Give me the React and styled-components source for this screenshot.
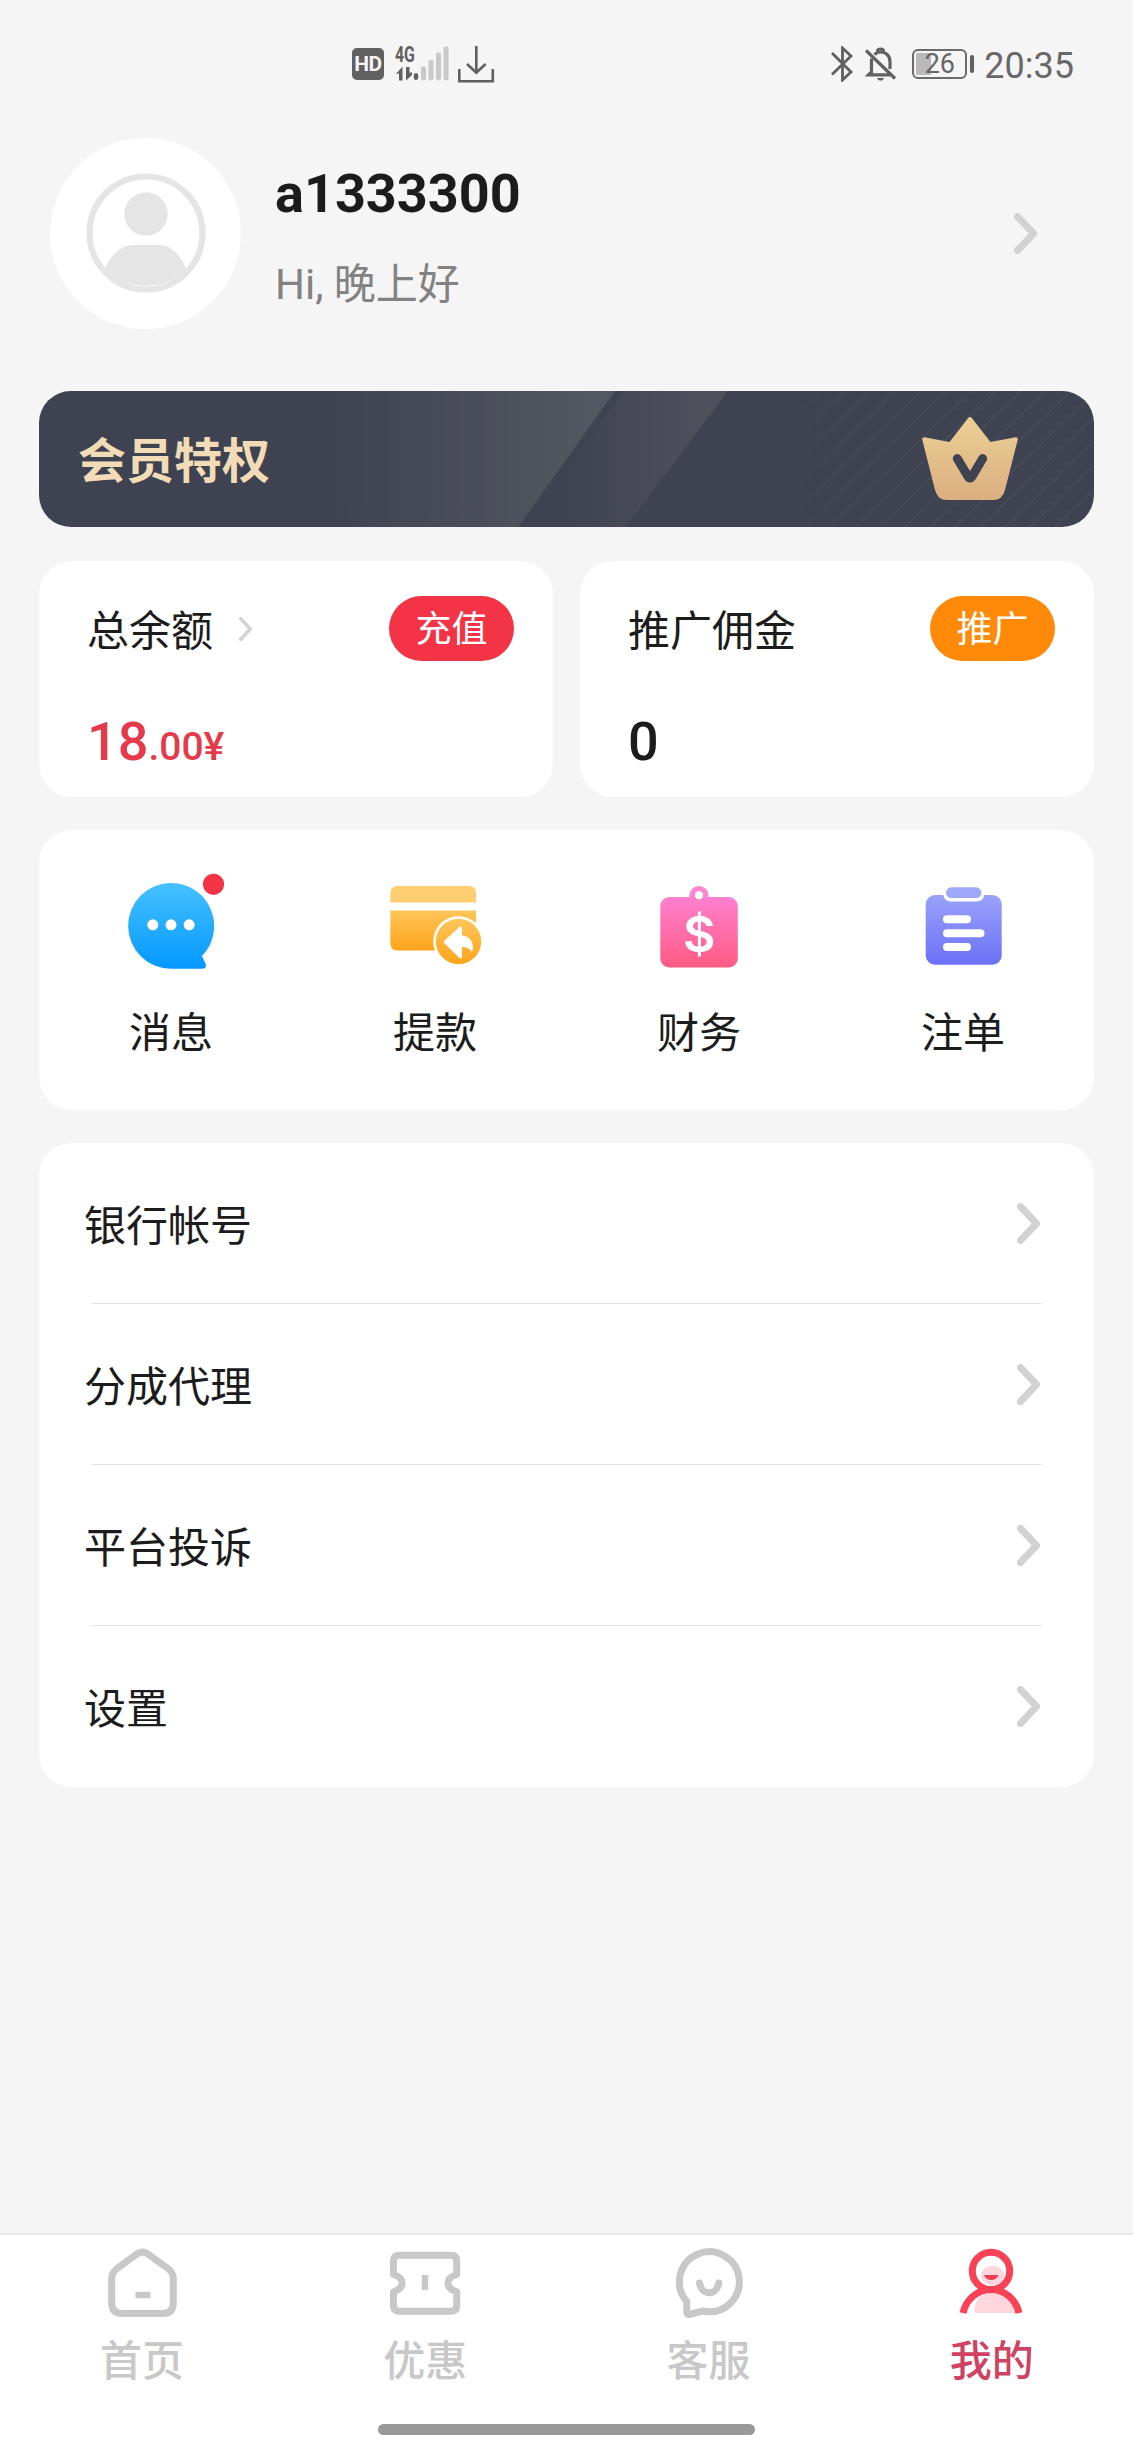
import React from "react";
import styled, { createGlobalStyle } from "styled-components";

const GlobalStyle = createGlobalStyle`
    *{
        box-sizing:border-box;
    }
    body{
        margin:0;
        background-color:#f5f5f5;
        font-family: Roboto, "Noto Sans CJK SC", sans-serif;
        color:#1c1c1c;
    }
    svg{
        display:block;
        flex:none;
    }
`

const Page = styled.div`
    width:1133px;
    height:2453px;
    display:flex;
    flex-direction:column;
    background-color:#f5f5f5;
    overflow:hidden;
`

const StatusBar = styled.div`
    height:128px;
    flex:none;
    display:flex;
    justify-content:space-between;
    align-items:center;
    padding:0 59px 0 352px;
`

const StatusGroup = styled.div`
    display:flex;
    align-items:center;
`

const HdBadge = styled.span`
    width:32px;
    height:32px;
    margin-right:11px;
    border-radius:5px;
    background-color:#606060;
    color:#f4f4f4;
    font-size:21px;
    font-weight:700;
    line-height:33px;
    text-align:center;
    letter-spacing:-0.5px;
`

const Network = styled.div`
    width:54px;
    height:36px;
    margin-right:8px;
    position:relative;
`

const NetworkLabel = styled.span`
    position:absolute;
    left:0;
    top:0;
    font-size:22px;
    font-weight:700;
    line-height:18px;
    color:#606060;
    transform:scaleX(0.72);
    transform-origin:left;
`

const Battery = styled.div`
    width:55px;
    height:30px;
    margin-left:15px;
    border:2px solid #6b6b6b;
    border-radius:6px;
    font-size:27px;
    line-height:26px;
    font-weight:400;
    color:#666;
    background:linear-gradient(#b9b9b9, #b9b9b9) 2px 2px / 15px 22px no-repeat;
    display:flex;
    align-items:center;
    justify-content:center;
`

const BatteryCap = styled.i`
    width:4px;
    height:18px;
    margin-left:3px;
    border-radius:2px;
    background-color:#606060;
`

const Clock = styled.span`
    margin-left:10px;
    padding-top:3px;
    font-size:36px;
    line-height:40px;
    color:#686868;
`

const Profile = styled.header`
    height:192px;
    margin-top:9px;
    padding:0 96px 0 50px;
    display:flex;
    align-items:center;
    flex:none;
`

const Avatar = styled.div`
    width:191px;
    height:191px;
    border-radius:50%;
    background-color:#fff;
    display:flex;
    align-items:center;
    justify-content:center;
`

const ProfileText = styled.div`
    flex:1;
    padding:6px 0 0 34px;
`

const UserName = styled.h1`
    margin:0;
    font-size:54px;
    line-height:64px;
    height:64px;
    font-weight:700;
`

const Greeting = styled.p`
    margin:34px 0 0;
    height:50px;
    font-size:42px;
    line-height:50px;
    color:#828282;
`

const Content = styled.main`
    margin-top:62px;
    padding:0 39px;
    display:flex;
    flex-direction:column;
    gap:33px;
`

const VipBanner = styled.section`
    height:136px;
    margin-bottom:1px;
    position:relative;
    border-radius:32px;
    overflow:hidden;
    background-color:#3f4250;
    display:flex;
    align-items:center;
    justify-content:space-between;
    padding:0 75px 0 39px;
`

const BannerArt = styled.svg`
    position:absolute;
    left:0;
    top:0;
`

const BannerTitle = styled.h2`
    margin:0;
    padding-top:4px;
    position:relative;
    font-size:48px;
    line-height:60px;
    height:62px;
    font-weight:700;
    color:#f1dcb7;
`

const CrownIcon = styled.svg`
    position:relative;
`

const Balances = styled.section`
    display:grid;
    grid-template-columns:514px 514px;
    gap:27px;
`

const Card = styled.div`
    background-color:#fff;
    border-radius:33px;
`

const BalanceCard = styled(Card)`
    height:236px;
    padding:35px 39px 0 48px;
`

const BalanceTop = styled.div`
    height:65px;
    display:flex;
    align-items:center;
`

const BalanceTitle = styled.span`
    height:50px;
    padding-top:3px;
    line-height:50px;
    font-size:42px;
    margin-right:26px;
`

const PillButton = styled.button`
    width:125px;
    height:65px;
    margin-left:auto;
    padding:3px 0 0;
    border:none;
    border-radius:33px;
    background-color:${props => props.color};
    color:#fff;
    font-family:inherit;
    font-size:36px;
    line-height:60px;
`

const Amount = styled.div`
    margin-top:49px;
    font-size:54px;
    line-height:64px;
    font-weight:500;
    color:${props => props.color};

    small{
        font-size:39px;
    }
`

const MenuCard = styled(Card)`
    height:280px;
    display:grid;
    grid-template-columns:repeat(4, 264px);
`

const MenuItem = styled.div`
    display:flex;
    flex-direction:column;
    align-items:center;
    padding-top:43px;
`

const MenuLabel = styled.span`
    height:50px;
    margin-top:36px;
    font-size:42px;
    line-height:50px;
`

const List = styled(Card)`
    height:644px;
`

const Row = styled.div`
    height:161px;
    padding:0 54px 0 45px;
    display:flex;
    align-items:center;
    justify-content:space-between;
    background:${props => props.$last ? "none" : "linear-gradient(#e4e4e4, #e4e4e4) 52px 160px / 951px 2px no-repeat"};
`

const RowLabel = styled.span`
    height:50px;
    padding-top:3px;
    font-size:42px;
    line-height:50px;
`

const TabBar = styled.nav`
    height:220px;
    margin-top:auto;
    flex:none;
    border-top:2px solid #e8e8e8;
    background-color:#fff;
    display:flex;
    flex-direction:column;
    align-items:center;
`

const Tabs = styled.div`
    width:100%;
    height:189px;
    display:grid;
    grid-template-columns:repeat(4, 1fr);
`

const Tab = styled.div`
    display:flex;
    flex-direction:column;
    align-items:center;
    padding-top:11px;
    color:${props => props.$active ? "#d04263" : "#c8c8c8"};
`

const TabLabel = styled.span`
    height:50px;
    margin-top:17px;
    padding-left:1px;
    font-size:42px;
    line-height:50px;
    font-weight:500;
`

const HomeIndicator = styled.div`
    width:377px;
    height:11px;
    border-radius:6px;
    background-color:#999;
`

const Chevron = ({ width = 23, height = 41, stroke = 7 }) => (
    <svg width={width} height={height} fill="none" stroke="#d2d2d2" strokeWidth={stroke} strokeLinecap="round" strokeLinejoin="round">
        <path d={`M${stroke / 2} ${stroke / 2}L${width - stroke / 2} ${height / 2}L${stroke / 2} ${height - stroke / 2}`} />
    </svg>
)

// data arrows under 4G and the four signal bars
const SignalIcon = () => (
    <svg width="54" height="36" viewBox="395 46 54 36">
        <path d="M396 74l6.500-7.500v14h-3.500v-7z M406 67h3.500v6l2.500-1v3l-6 5.500z" fill="#606060" />
        <ellipse cx="416" cy="76.500" rx="2.300" ry="3.500" fill="#606060" />
        <g fill="#c9c9c9">
            <rect x="421" y="66.500" width="5" height="14" rx="2" />
            <rect x="428.500" y="60" width="5" height="20.500" rx="2" />
            <rect x="436" y="52.500" width="5" height="28" rx="2" />
            <rect x="443.500" y="46.500" width="5" height="34" rx="2" />
        </g>
    </svg>
)

const DownloadIcon = () => (
    <svg width="38" height="38" viewBox="457 44 38 38" fill="none" stroke="#606060" strokeWidth="2.600">
        <path d="M476.300 45v27M467 63l9.300 8.700 9.300-8.700M459.300 68v12.200h33.500V68" />
    </svg>
)

const BluetoothIcon = () => (
    <svg width="22" height="36" viewBox="831 46 22 36" fill="none" stroke="#606060" strokeWidth="2.800">
        <path d="M832 53l19 19-8.500 8V48l8.500 8-19 18.500" />
    </svg>
)

const BellIcon = styled.svg`
    margin-left:12px;
`

const MutedBellIcon = () => (
    <BellIcon width="32" height="34" viewBox="865 46 32 34" fill="none" stroke="#606060" strokeWidth="3.200">
        <path d="M866 49.500l29 28" />
        <path d="M871.500 57.500V71l-3 2.800H890M874.500 53.500c2-2 4-2.500 6-2.500 5.500 0 9.500 4 9.500 9.500V68" />
        <path d="M877.500 50.500c0-2 1.500-2.500 3-2.500s3 .5 3 2.500" />
        <path d="M877 77h7c-.5 2-2 2.500-3.500 2.500S877.500 79 877 77z" fill="#606060" stroke="none" />
    </BellIcon>
)

const AvatarIcon = () => (
    <svg width="120" height="120" viewBox="0 0 120 120">
        <circle cx="60" cy="60" r="56.500" fill="none" stroke="#e5e5e5" strokeWidth="6.200" />
        <circle cx="60" cy="41" r="21.700" fill="#e5e5e5" />
        <path d="M19 96C23 84 34 72 47 72H73C86 72 96 84 100 96A57 57 0 0 1 19 96Z" fill="#e5e5e5" />
    </svg>
)

const hatchLines = Array.from({ length: 19 }, (_, i) => 640 + i * 25)

const BannerBackground = () => (
    <BannerArt width="1055" height="137" viewBox="0 0 1055 137">
        <defs>
            <linearGradient id="beam1" gradientUnits="userSpaceOnUse" x1="290" y1="0" x2="550" y2="0">
                <stop offset="0" stopColor="#535761" stopOpacity="0" />
                <stop offset="1" stopColor="#535761" />
            </linearGradient>
            <linearGradient id="beam2" gradientUnits="userSpaceOnUse" x1="525" y1="0" x2="665" y2="0">
                <stop offset="0" stopColor="#4e505c" stopOpacity="0" />
                <stop offset="1" stopColor="#4e505c" />
            </linearGradient>
            <linearGradient id="hatch" gradientUnits="userSpaceOnUse" x1="700" y1="0" x2="1055" y2="0">
                <stop offset="0" stopColor="#fff" stopOpacity="0" />
                <stop offset="0.6" stopColor="#fff" stopOpacity="0.05" />
                <stop offset="1" stopColor="#fff" stopOpacity="0.05" />
            </linearGradient>
        </defs>
        <path d="M485 137L585 0H689L586 137Z" fill="url(#beam2)" />
        <path d="M250 0H576L478.500 137H250Z" fill="url(#beam1)" />
        {hatchLines.map(x => (
            <path key={x} d={`M${x} 137L${x + 142} 0`} stroke="url(#hatch)" strokeWidth="1.500" />
        ))}
    </BannerArt>
)

const Crown = () => (
    <CrownIcon width="98" height="86" viewBox="921 416 98 86">
        <defs>
            <linearGradient id="gold" x1="0" y1="0" x2="0" y2="1">
                <stop offset="0" stopColor="#ecd096" />
                <stop offset="1" stopColor="#dbae80" />
            </linearGradient>
        </defs>
        <path d="M924.500 437.300L949.500 442 968 418.200Q970 415.700 972 418.200L990.500 442 1015.500 437.300Q1018.300 437 1017.700 439.800L1005 490Q1002.500 500 993 500H947Q937.500 500 935 490L922.300 439.800Q921.700 437 924.500 437.300Z" fill="url(#gold)" />
        <path d="M957.300 458.500L968 476.500Q970 479.500 972 476.500L982.700 458.500" fill="none" stroke="#3f4250" strokeWidth="9" strokeLinecap="round" strokeLinejoin="round" />
    </CrownIcon>
)

const MessageIcon = () => (
    <svg width="106" height="100" viewBox="118 873 106 100">
        <defs>
            <linearGradient id="blue" x1="0" y1="0" x2="0" y2="1">
                <stop offset="0" stopColor="#45c1ff" />
                <stop offset="1" stopColor="#0598ff" />
            </linearGradient>
        </defs>
        <path d="M171 883A43 43 0 0 1 202 956L205.500 963.500Q207 968.700 202.500 968.700H171A42.850 42.850 0 0 1 171 883Z" fill="url(#blue)" />
        <g fill="#fff">
            <circle cx="152.800" cy="924.800" r="5.500" />
            <circle cx="171" cy="924.800" r="5.500" />
            <circle cx="189.200" cy="924.800" r="5.500" />
        </g>
        <circle cx="213.500" cy="884.300" r="10.600" fill="#f33446" />
    </svg>
)

const WithdrawIcon = () => (
    <svg width="106" height="100" viewBox="382 873 106 100">
        <defs>
            <linearGradient id="amber" x1="0" y1="0" x2="0" y2="1">
                <stop offset="0" stopColor="#ffc65a" />
                <stop offset="1" stopColor="#ffa31a" />
            </linearGradient>
        </defs>
        <path d="M390.300 902.500V893.500Q390.300 886 397.800 886H468.500Q476 886 476 893.500V902.500Z" fill="#ffce70" />
        <path d="M390.300 910.500H476V950.500H397.800Q390.300 950.500 390.300 943Z" fill="url(#amber)" />
        <circle cx="458.500" cy="941.500" r="25.300" fill="#fff" />
        <circle cx="458.500" cy="941.500" r="22.700" fill="url(#amber)" />
        <path d="M444.600 940.500L459.500 927Q462 925.500 462 928.500V935.500C470 936 475 943 472 952.500C470 948.500 466.500 947 462 947V956.500Q462 959.500 459.500 958L444.600 943.500Q443.300 942 444.600 940.500Z" fill="#fff" />
    </svg>
)

const FinanceIcon = () => (
    <svg width="106" height="100" viewBox="646 873 106 100">
        <defs>
            <linearGradient id="pink" x1="0" y1="0" x2="0" y2="1">
                <stop offset="0" stopColor="#ff80cf" />
                <stop offset="1" stopColor="#ff5b83" />
            </linearGradient>
        </defs>
        <circle cx="699" cy="895.500" r="6.800" fill="none" stroke="#ff86d2" strokeWidth="5.600" />
        <rect x="660.300" y="897" width="77.500" height="70.500" rx="9" fill="url(#pink)" />
        <circle cx="699" cy="895.300" r="4" fill="#fff" />
        <text x="699.300" y="952.300" textAnchor="middle" fontFamily="Inter" fontSize="50" fontWeight="600" fill="#fff">$</text>
    </svg>
)

const OrdersIcon = () => (
    <svg width="106" height="100" viewBox="910 873 106 100">
        <defs>
            <linearGradient id="violet" x1="0" y1="0" x2="0" y2="1">
                <stop offset="0" stopColor="#9aa2fb" />
                <stop offset="1" stopColor="#6b70f5" />
            </linearGradient>
        </defs>
        <rect x="925.700" y="895" width="76" height="69.700" rx="9.500" fill="url(#violet)" />
        <rect x="943" y="884" width="41.500" height="17.600" rx="8" fill="#fff" />
        <rect x="946" y="887.300" width="35.500" height="10.800" rx="5.400" fill="#9fa9fb" />
        <g stroke="#fff" strokeWidth="8" strokeLinecap="round">
            <path d="M947 919.200h20M947 933.200h33.500M947 947h20" />
        </g>
    </svg>
)

const HomeIcon = () => (
    <svg width="80" height="74" viewBox="101.600 2246 80 74" fill="none" stroke="#c8c8c8" strokeWidth="7">
        <path d="M137 2253.600Q142 2250.700 147 2253.600L167.500 2268.500Q172.900 2272.500 172.900 2278.500V2303Q172.900 2313.400 162.500 2313.400H121.700Q111.300 2313.400 111.300 2303V2278.500Q111.300 2272.500 116.700 2268.500Z" />
        <path d="M135 2295h15" strokeWidth="6.500" />
    </svg>
)

const TicketIcon = () => (
    <svg width="80" height="74" viewBox="385 2246 80 74" fill="none" stroke="#c8c8c8" strokeWidth="7" strokeLinejoin="round">
        <path d="M393.500 2274.500V2261Q393.500 2255.300 399.500 2255.300H451Q456.700 2255.300 456.700 2261V2274.500C445 2278 445 2288 456.700 2291.800V2305.500Q456.700 2311.300 451 2311.300H399.500Q393.500 2311.300 393.500 2305.500V2291.800C405 2288 405 2278 393.500 2274.500Z" />
        <path d="M425 2275v15" strokeWidth="6.500" />
    </svg>
)

const SupportIcon = () => (
    <svg width="80" height="74" viewBox="668.200 2246 80 74" fill="none" stroke="#c8c8c8" strokeWidth="7" strokeLinecap="round" strokeLinejoin="round">
        <path d="M687 2301.500A30 30 0 1 1 703 2311L689.500 2314.500Q687 2315 687 2312Z" />
        <path d="M699.700 2283c2 13 17 13 19.300 0" />
    </svg>
)

const MineIcon = () => (
    <svg width="80" height="74" viewBox="951.500 2246 80 74">
        <path d="M975 2313C974 2300 982 2293 992 2293S1014 2301 1017 2313Z" fill="#ffd7dc" />
        <g fill="none" stroke="#f94255" strokeWidth="7">
            <circle cx="991.500" cy="2271" r="18.700" />
            <path d="M963.500 2313C966.500 2299.500 978 2289.500 991.500 2289.500S1016.500 2299.500 1019.500 2313" />
        </g>
        <ellipse cx="993" cy="2275.500" rx="11.500" ry="9.800" fill="#ffd7dc" />
        <path d="M984.500 2275h14.500c-2 6.800-12.500 6.800-14.500 0z" fill="#f33e50" />
    </svg>
)

const menuItems = [
    { label: "消息", icon: <MessageIcon /> },
    { label: "提款", icon: <WithdrawIcon /> },
    { label: "财务", icon: <FinanceIcon /> },
    { label: "注单", icon: <OrdersIcon /> }
]

const rows = ["银行帐号", "分成代理", "平台投诉", "设置"]

const tabs = [
    { label: "首页", icon: <HomeIcon /> },
    { label: "优惠", icon: <TicketIcon /> },
    { label: "客服", icon: <SupportIcon /> },
    { label: "我的", icon: <MineIcon />, active: true }
]

function App() {
    return (
        <Page>
            <GlobalStyle />
            <StatusBar>
                <StatusGroup>
                    <HdBadge>HD</HdBadge>
                    <Network>
                        <NetworkLabel>4G</NetworkLabel>
                        <SignalIcon />
                    </Network>
                    <DownloadIcon />
                </StatusGroup>
                <StatusGroup>
                    <BluetoothIcon />
                    <MutedBellIcon />
                    <Battery>26</Battery>
                    <BatteryCap />
                    <Clock>20:35</Clock>
                </StatusGroup>
            </StatusBar>
            <Profile>
                <Avatar>
                    <AvatarIcon />
                </Avatar>
                <ProfileText>
                    <UserName>a1333300</UserName>
                    <Greeting>Hi, 晚上好</Greeting>
                </ProfileText>
                <Chevron />
            </Profile>
            <Content>
                <VipBanner>
                    <BannerBackground />
                    <BannerTitle>会员特权</BannerTitle>
                    <Crown />
                </VipBanner>
                <Balances>
                    <BalanceCard>
                        <BalanceTop>
                            <BalanceTitle>总余额</BalanceTitle>
                            <Chevron width={13} height={24} stroke={3.5} />
                            <PillButton color="#f33446">充值</PillButton>
                        </BalanceTop>
                        <Amount color="#e43a4b">18<small>.00¥</small></Amount>
                    </BalanceCard>
                    <BalanceCard>
                        <BalanceTop>
                            <BalanceTitle>推广佣金</BalanceTitle>
                            <PillButton color="#ff8a0a">推广</PillButton>
                        </BalanceTop>
                        <Amount color="#1c1c1c">0</Amount>
                    </BalanceCard>
                </Balances>
                <MenuCard>
                    {menuItems.map(item => (
                        <MenuItem key={item.label}>
                            {item.icon}
                            <MenuLabel>{item.label}</MenuLabel>
                        </MenuItem>
                    ))}
                </MenuCard>
                <List>
                    {rows.map((label, index) => (
                        <Row key={label} $last={index === rows.length - 1}>
                            <RowLabel>{label}</RowLabel>
                            <Chevron />
                        </Row>
                    ))}
                </List>
            </Content>
            <TabBar>
                <Tabs>
                    {tabs.map(tab => (
                        <Tab key={tab.label} $active={tab.active}>
                            {tab.icon}
                            <TabLabel>{tab.label}</TabLabel>
                        </Tab>
                    ))}
                </Tabs>
                <HomeIndicator />
            </TabBar>
        </Page>
    )
}

export default App;
